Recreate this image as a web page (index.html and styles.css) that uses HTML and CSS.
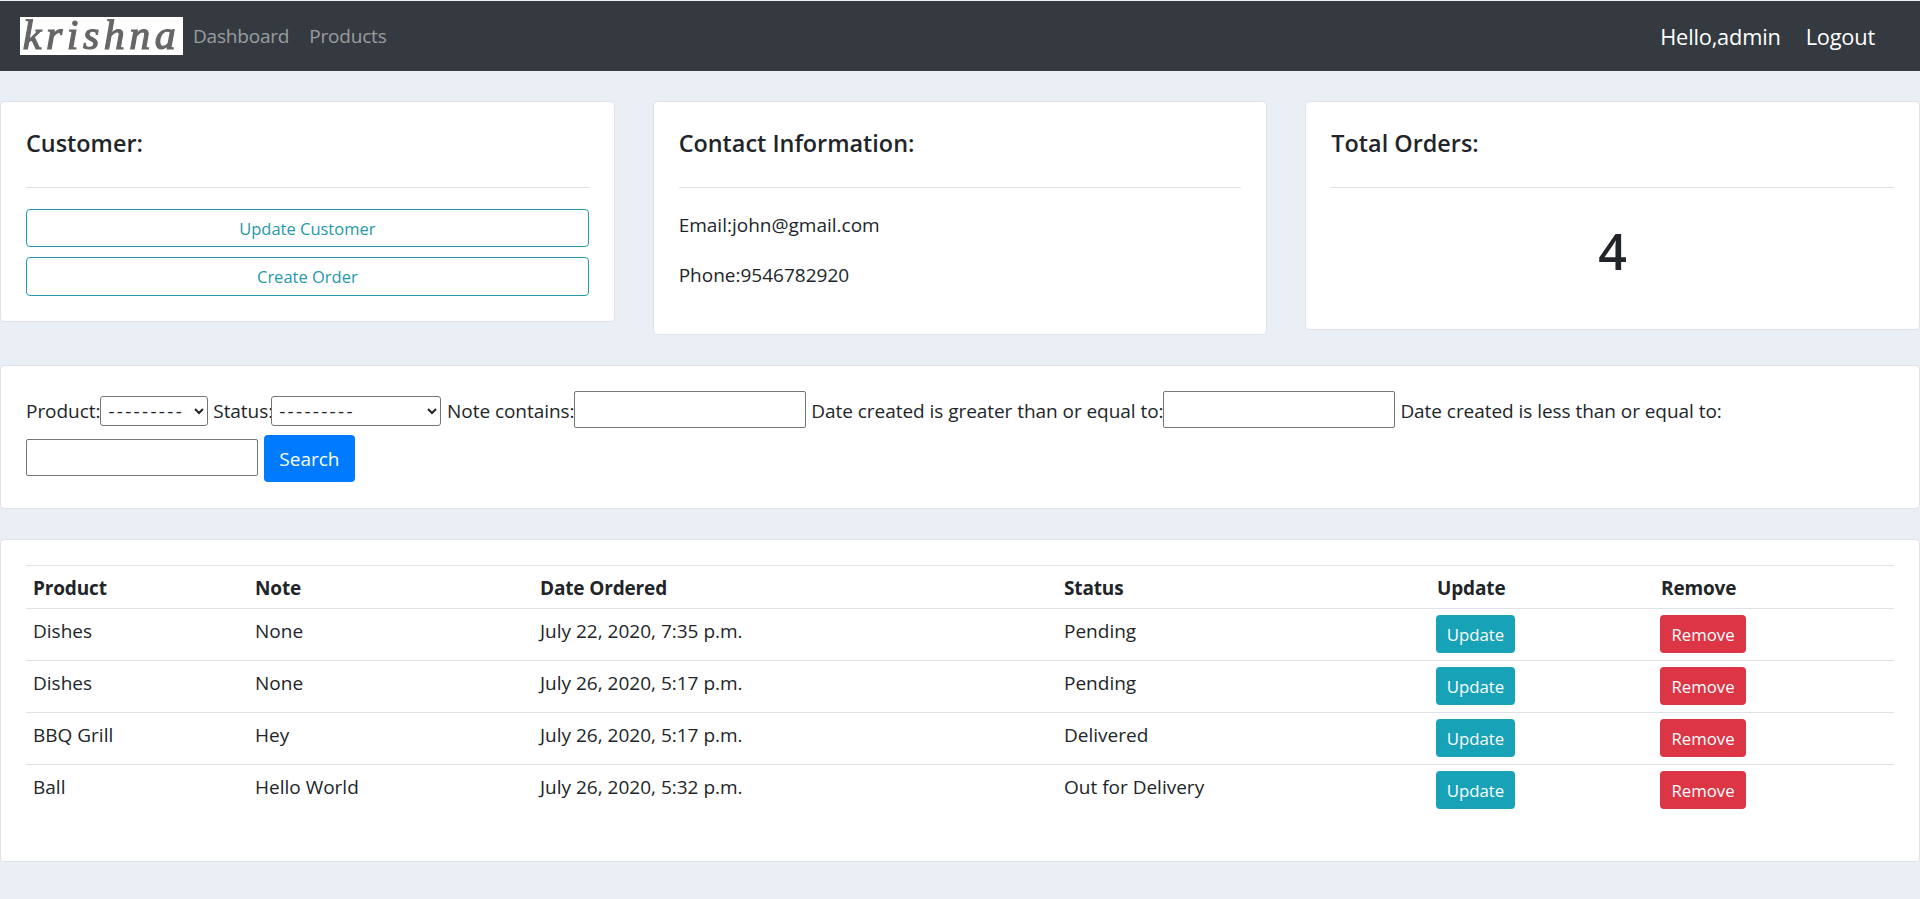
FILE: index.html
```html
<!DOCTYPE html>
<html lang="en">
<head>
    <meta charset="UTF-8">
    <meta name="viewport" content="width=device-width, initial-scale=1.0">
    <title>Krishna</title>
    <link rel="stylesheet" href="styles.css">
</head>
<body>
    <header class="navbar">
        <div class="logo"><span class="logo-text">krishna</span></div>
        <a class="nav-link" href="#">Dashboard</a>
        <a class="nav-link" href="#">Products</a>
        <div class="nav-right">
            <span class="nav-user">Hello,admin</span>
            <a class="nav-logout" href="#">Logout</a>
        </div>
    </header>

    <!-- Summary cards -->
    <section class="summary">
        <div class="card">
            <h5 class="card-title">Customer:</h5>
            <hr class="divider">
            <a class="btn-outline" href="#">Update Customer</a>
            <a class="btn-outline" href="#">Create Order</a>
        </div>
        <div class="card card-contact">
            <h5 class="card-title">Contact Information:</h5>
            <hr class="divider">
            <p class="contact-line">Email:john@gmail.com</p>
            <p class="contact-line">Phone:9546782920</p>
        </div>
        <div class="card card-total">
            <h5 class="card-title">Total Orders:</h5>
            <hr class="divider">
            <h1 class="total-number">4</h1>
        </div>
    </section>

    <!-- Filter -->
    <section class="card card-filter">
        <form class="filter-form">
            <label>Product:</label><select class="select-product"><option>---------</option></select>
            <label>Status:</label><select class="select-status"><option>---------</option></select>
            <label>Note contains:</label><input class="text-input" type="text">
            <label>Date created is greater than or equal to:</label><input class="text-input" type="text">
            <label>Date created is less than or equal to:</label>
            <input class="text-input" type="text">
            <button class="btn-search" type="button">Search</button>
        </form>
    </section>

    <!-- Orders -->
    <section class="card card-orders">
        <table class="orders">
            <colgroup>
                <col class="col-product">
                <col class="col-note">
                <col class="col-date">
                <col class="col-status">
                <col class="col-update">
                <col class="col-remove">
            </colgroup>
            <tr>
                <th>Product</th>
                <th>Note</th>
                <th>Date Ordered</th>
                <th>Status</th>
                <th>Update</th>
                <th>Remove</th>
            </tr>
            <tr>
                <td>Dishes</td>
                <td>None</td>
                <td>July 22, 2020, 7:35 p.m.</td>
                <td>Pending</td>
                <td><a class="btn btn-update" href="#">Update</a></td>
                <td><a class="btn btn-remove" href="#">Remove</a></td>
            </tr>
            <tr>
                <td>Dishes</td>
                <td>None</td>
                <td>July 26, 2020, 5:17 p.m.</td>
                <td>Pending</td>
                <td><a class="btn btn-update" href="#">Update</a></td>
                <td><a class="btn btn-remove" href="#">Remove</a></td>
            </tr>
            <tr>
                <td>BBQ Grill</td>
                <td>Hey</td>
                <td>July 26, 2020, 5:17 p.m.</td>
                <td>Delivered</td>
                <td><a class="btn btn-update" href="#">Update</a></td>
                <td><a class="btn btn-remove" href="#">Remove</a></td>
            </tr>
            <tr>
                <td>Ball</td>
                <td>Hello World</td>
                <td>July 26, 2020, 5:32 p.m.</td>
                <td>Out for Delivery</td>
                <td><a class="btn btn-update" href="#">Update</a></td>
                <td><a class="btn btn-remove" href="#">Remove</a></td>
            </tr>
        </table>
    </section>
</body>
</html>
```

FILE: styles.css
```css
body {
    font-family: "Open Sans", "Noto Sans", sans-serif;
    font-size: 19px;
    margin: 0;
    padding: 0;
    background-color: #eaeef5;
    color: #212529;
}

a {
    text-decoration: none;
}

.navbar {
    display: flex;
    align-items: center;
    height: 70px;
    margin-top: 1px;
    padding: 0 45px 0 20px;
    background-color: #343a40;
    font-size: 19px;
    letter-spacing: -0.2px;
}

.logo {
    width: 163px;
    height: 38px;
    margin-right: 10px;
    background-color: white;
    text-align: center;
}

.logo-text {
    font-family: "Liberation Serif", serif;
    font-size: 42px;
    font-style: italic;
    line-height: 36px;
    letter-spacing: 4.5px;
    color: #666;
    -webkit-text-stroke: 1.2px #666;
    filter: blur(0.7px);
    display: block;
}

.nav-link {
    color: rgba(255, 255, 255, 0.5);
    margin-right: 20px;
}

.nav-right {
    margin-left: auto;
    display: flex;
    gap: 25px;
    color: white;
    font-size: 21.8px;
}

.nav-logout {
    color: white;
}

.summary {
    display: grid;
    grid-template-columns: repeat(3, 1fr);
    gap: 38px;
    align-items: start;
    margin-top: 30px;
}

.card {
    box-sizing: border-box;
    background-color: white;
    border: 1px solid #dfe2e8;
    border-radius: 4px;
    padding: 25px;
}

.card-title {
    font-size: 23.4px;
    font-weight: 600;
    line-height: 32px;
    margin: 0;
    color: #212529;
}

.divider {
    border: 0;
    border-top: 1px solid #dfe1e4;
    margin: 28px 0 21px;
}

.btn-outline {
    display: block;
    box-sizing: border-box;
    height: 38px;
    line-height: 37px;
    margin-bottom: 10px;
    border: 1px solid #2598aa;
    border-radius: 4px;
    color: #2598aa;
    text-align: center;
    font-size: 16.5px;
}

.btn-outline:last-child {
    height: 39px;
    margin-bottom: 0;
}

.contact-line {
    margin: 0 0 26px;
    line-height: 24px;
    position: relative;
    top: 4px;
}

.card-contact {
    height: 234px;
}

.card-total {
    height: 229px;
}

.total-number {
    margin: 34px 0 0;
    text-align: center;
    font-size: 50px;
    font-weight: 600;
    line-height: 58px;
}

.card-filter {
    margin-top: 30px;
    height: 144px;
    padding: 22px 25px 0;
}

.filter-form {
    line-height: 47px;
    letter-spacing: -0.05px;
}

.filter-form select {
    height: 30px;
    background: white;
    border: 1px solid #767676;
    border-radius: 3px;
    font-family: "Open Sans", sans-serif;
    font-size: 19px;
    letter-spacing: 2.3px;
    color: #212529;
    padding-left: 3px;
}

.select-product {
    width: 108px;
}

.select-status {
    width: 170px;
    margin-left: -2px;
    margin-right: 1px;
}

.text-input {
    box-sizing: border-box;
    width: 232px;
    height: 37px;
    border: 1px solid #767676;
    border-radius: 2px;
    padding: 1px 2px;
    vertical-align: 4px;
}

.btn-search {
    box-sizing: border-box;
    width: 91px;
    height: 47px;
    margin-left: 1px;
    background-color: #007bff;
    color: white;
    border: none;
    border-radius: 4px;
    font-family: "Open Sans", sans-serif;
    font-size: 19px;
}

.card-orders {
    margin-top: 30px;
    height: 323px;
}

.orders {
    width: 100%;
    table-layout: fixed;
    border-collapse: collapse;
}

.col-product { width: 222px; }
.col-note { width: 285px; }
.col-date { width: 524px; }
.col-status { width: 373px; }
.col-update { width: 224px; }

.orders th,
.orders td {
    padding: 7px;
    border-top: 1px solid #dee2e6;
    text-align: left;
    line-height: 28px;
}

.orders th {
    padding-top: 8px;
    padding-bottom: 6px;
    font-weight: 700;
    letter-spacing: -0.15px;
}

.orders td {
    padding-top: 6px;
    vertical-align: top;
    line-height: 32px;
    height: 38px;
}

.btn {
    display: block;
    box-sizing: border-box;
    height: 38px;
    line-height: 40px;
    margin-left: -1px;
    border-radius: 4px;
    color: white;
    text-align: center;
    font-size: 16.8px;
}

.btn-update {
    width: 79px;
    background-color: #17a2b8;
}

.btn-remove {
    width: 86px;
    background-color: #dc3545;
}
```
